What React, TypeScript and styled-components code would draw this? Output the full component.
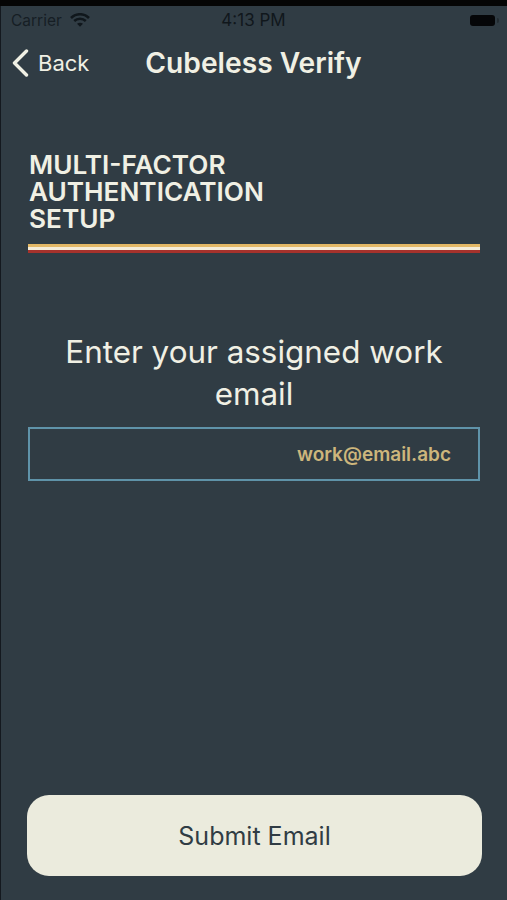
import React from 'react';
import styled, { createGlobalStyle } from 'styled-components';

const GlobalStyle = createGlobalStyle`
  html, body {
    margin: 0;
    padding: 0;
    background: #303c44;
  }
  * {
    box-sizing: border-box;
  }
`;

const Screen = styled.div`
  width: 507px;
  height: 900px;
  display: flex;
  flex-direction: column;
  background: #303c44;
  border-top: 6px solid #050505;
  box-shadow: inset 1px 0 0 #14191f;
  font-family: Inter, 'Liberation Sans', sans-serif;
  overflow: hidden;
`;

const StatusBar = styled.div`
  height: 28px;
  display: grid;
  grid-template-columns: 1fr auto 1fr;
  align-items: center;
  padding: 0 11px;
  color: #10171c;
`;

const Carrier = styled.div`
  display: flex;
  align-items: center;
  gap: 8px;
  font-size: 15.5px;
  color: #161e24;
`;

const Clock = styled.span`
  font-size: 17px;
  color: #10171c;
`;

const Battery = styled.div`
  justify-self: end;
  position: relative;
  width: 25px;
  height: 11px;
  margin-right: 1px;
  border-radius: 3px;
  background: #050608;

  &::after {
    content: '';
    position: absolute;
    right: -4px;
    top: 3px;
    width: 2px;
    height: 5px;
    border-radius: 0 2px 2px 0;
    background: #232c32;
  }
`;

const NavBar = styled.div`
  height: 58px;
  display: grid;
  grid-template-columns: 1fr auto 1fr;
  align-items: center;
  color: #f0f0e4;
`;

const BackLink = styled.div`
  display: flex;
  align-items: center;
  gap: 9px;
  padding-left: 12px;
  font-size: 22px;
`;

const Title = styled.div`
  font-size: 28.2px;
  font-weight: 600;
`;

const Body = styled.div`
  flex: 1;
  display: flex;
  flex-direction: column;
  padding: 0 27px 24px 28px;
`;

const Heading = styled.h1`
  margin: 59px 0 0;
  padding-left: 1px;
  font-size: 26.2px;
  line-height: 27px;
  font-weight: 600;
  color: #f0f0e4;
  text-transform: uppercase;
`;

const Stripe = styled.div`
  height: 9px;
  margin-top: 12px;
  background: linear-gradient(
    to bottom,
    #e3b866 0,
    #e3b866 3px,
    #f4ecd8 3px,
    #f4ecd8 6px,
    #a5322c 6px,
    #a5322c 9px
  );
`;

const Prompt = styled.p`
  margin: 78px 0 0;
  font-size: 31.4px;
  line-height: 42px;
  font-weight: 400;
  text-align: center;
  color: #f0f0e4;
`;

const EmailField = styled.div`
  height: 54px;
  margin-top: 12px;
  display: flex;
  align-items: center;
  justify-content: flex-end;
  padding: 0 27px;
  border: 2px solid #5f93a9;
  font-size: 19px;
  font-weight: 600;
  color: #cdb67c;
`;

const SubmitButton = styled.button`
  margin: auto -2px 0 -1px;
  height: 81px;
  border: none;
  border-radius: 22px;
  background: #ebebdd;
  color: #303c44;
  font-family: inherit;
  font-size: 25px;
`;

const App: React.FunctionComponent = () => {
  return (
    <Screen>
      <GlobalStyle />
      <StatusBar>
        <Carrier>
          Carrier
          <svg width="20" height="14" viewBox="0 0 20 14" fill="none" stroke="#10171c" strokeWidth="2.6">
            <path d="M1 5 C6 0, 14 0, 19 5" />
            <path d="M4.2 8 C7.5 5, 12.5 5, 15.8 8" />
            <path d="M10 13.8 L7 10.8 C9 9.4, 11 9.4, 13 10.8 Z" fill="#10171c" stroke="none" />
          </svg>
        </Carrier>
        <Clock>4:13 PM</Clock>
        <Battery />
      </StatusBar>
      <NavBar>
        <BackLink>
          <svg width="17" height="28" viewBox="0 0 17 28" fill="none" stroke="#f0f0e4" strokeWidth="3.4" strokeLinecap="round" strokeLinejoin="round">
            <path d="M14.5 2 L2.5 14 L14.5 26" />
          </svg>
          Back
        </BackLink>
        <Title>Cubeless Verify</Title>
      </NavBar>
      <Body>
        <Heading>
          Multi-Factor
          <br />
          Authentication
          <br />
          Setup
        </Heading>
        <Stripe />
        <Prompt>Enter your assigned work email</Prompt>
        <EmailField>work@email.abc</EmailField>
        <SubmitButton type="button">Submit Email</SubmitButton>
      </Body>
    </Screen>
  );
};

export default App;
